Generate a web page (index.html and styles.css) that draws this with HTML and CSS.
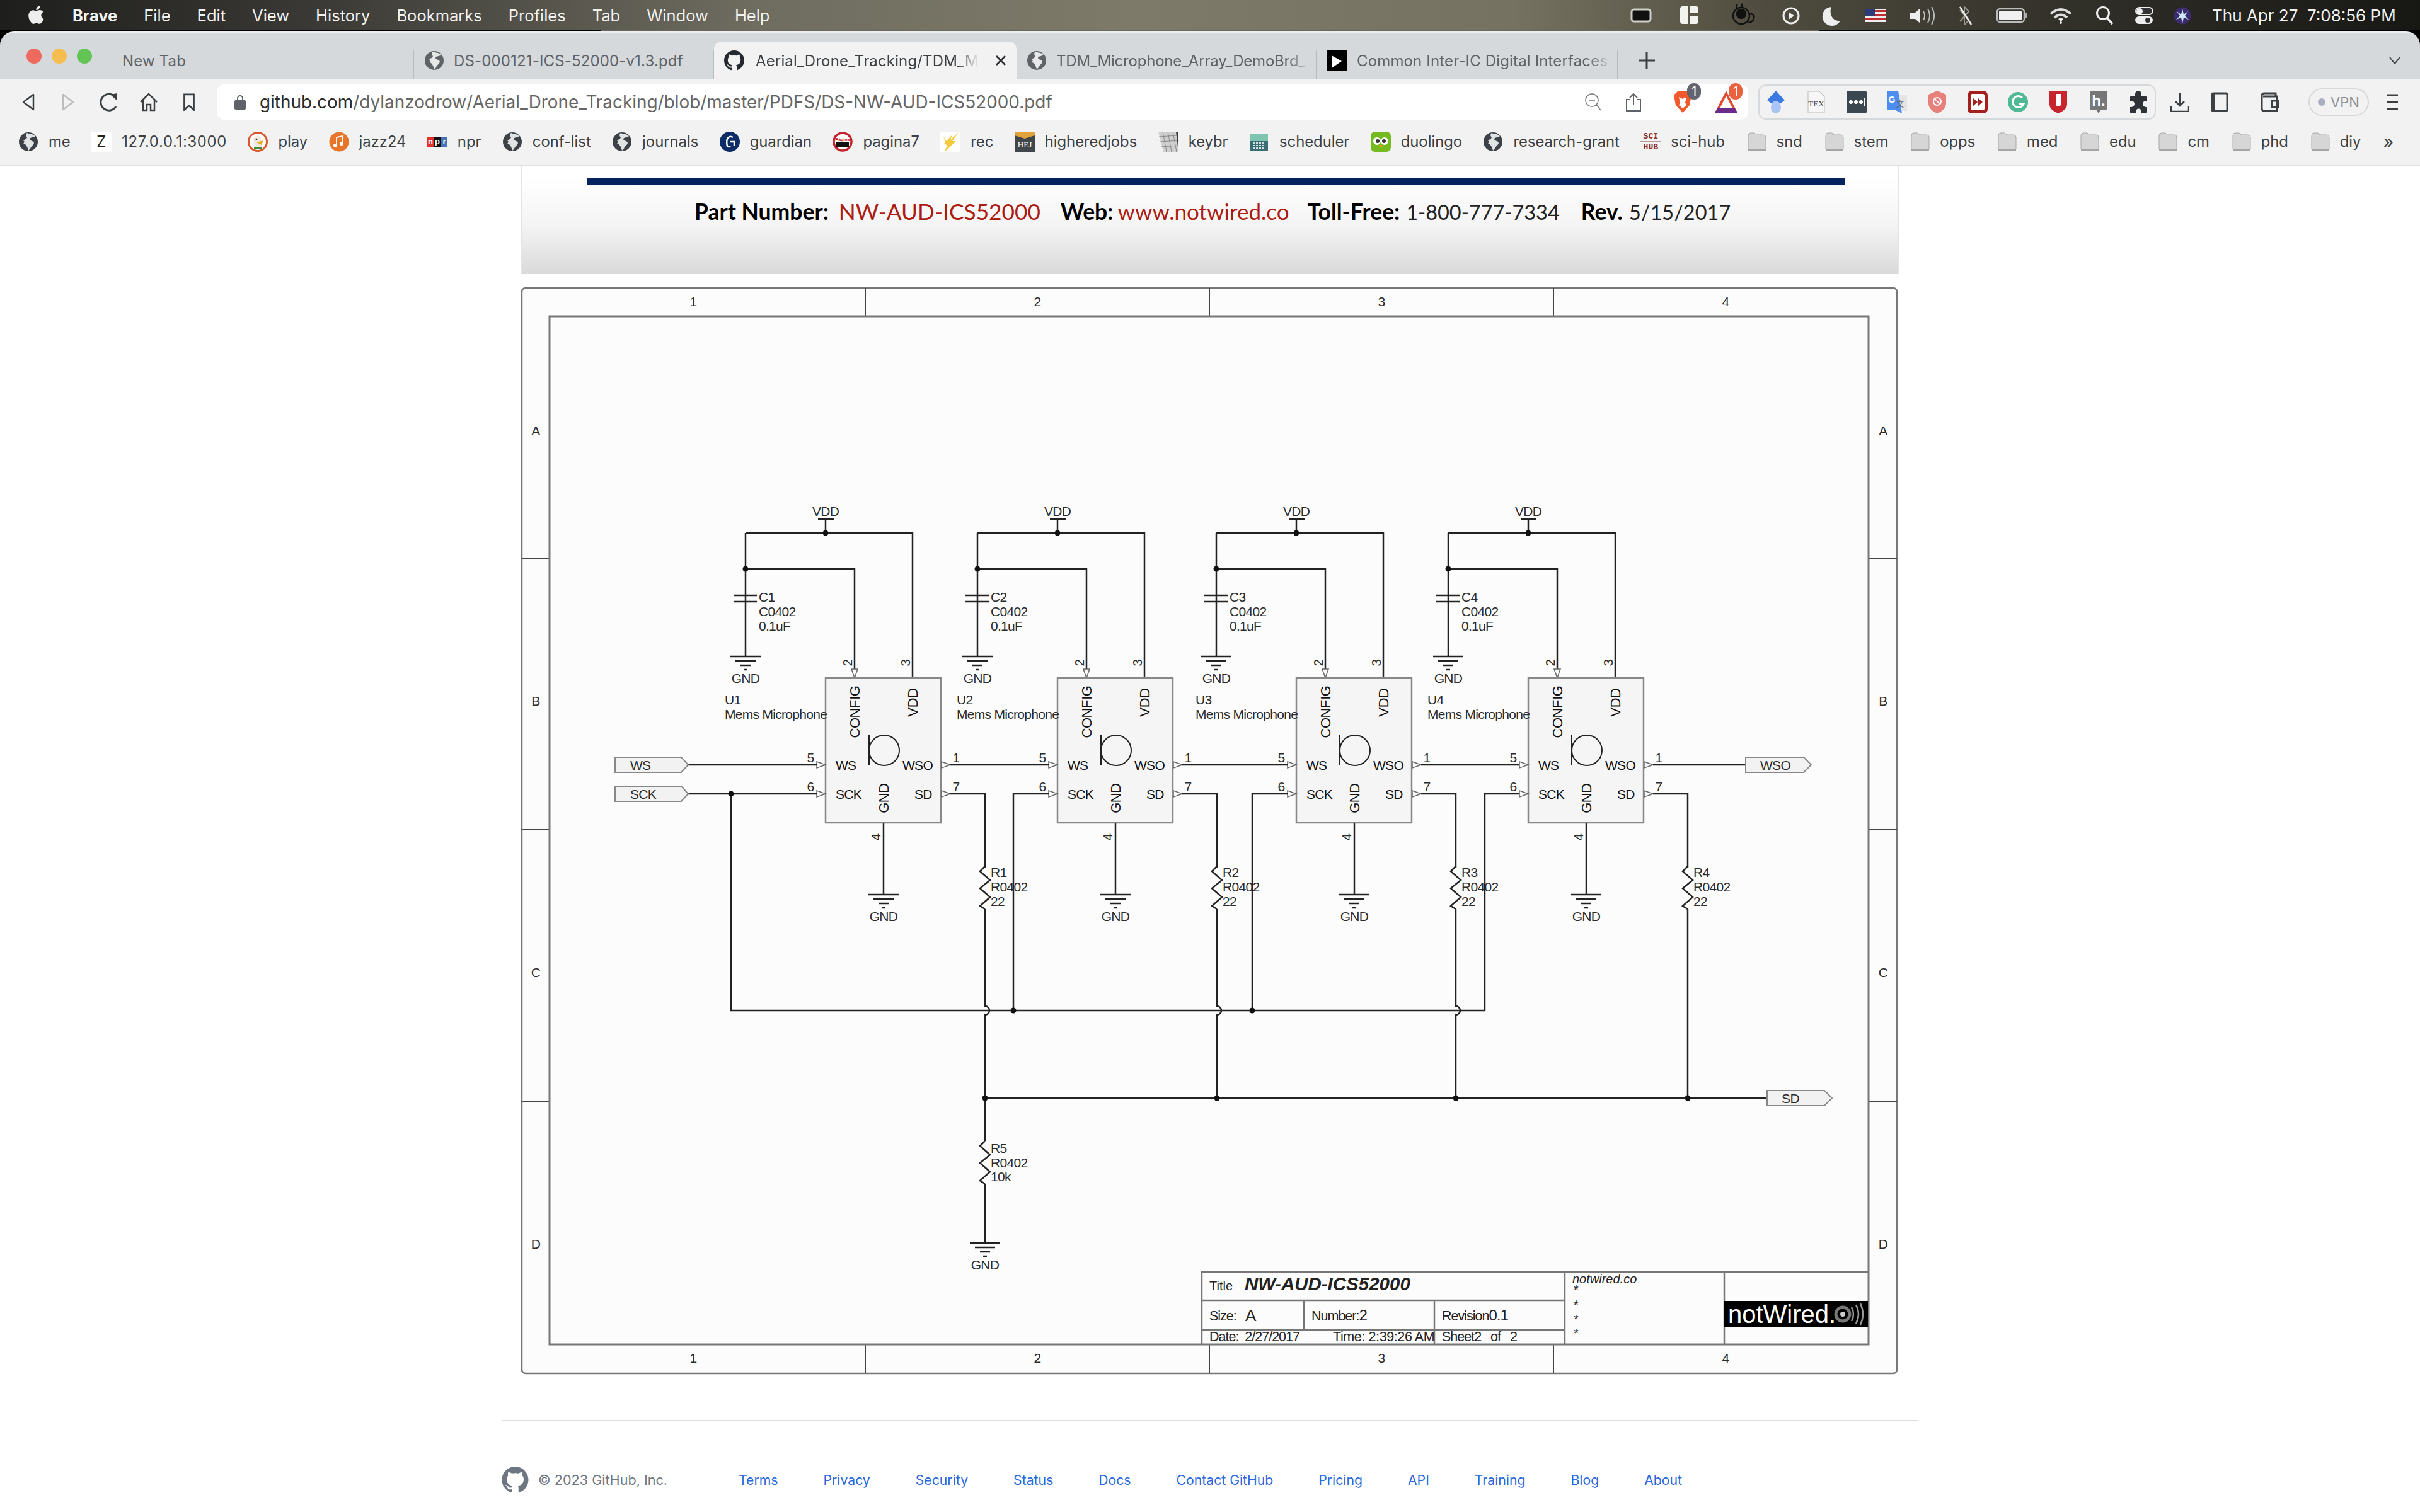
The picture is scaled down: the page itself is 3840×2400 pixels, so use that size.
FILE: index.html
```html
<!DOCTYPE html>
<html lang="en">
<head>
    <meta charset="UTF-8">
    <title>Aerial_Drone_Tracking/DS-NW-AUD-ICS52000.pdf</title>
    <link rel="stylesheet" href="styles.css">
</head>
<body>
    <svg class="sprite">
        <symbol id="i-globe" viewBox="0 0 32 32">
            <circle cx="16" cy="16" r="15" fill="currentColor"/>
            <path d="M14 2c4 2 9 1 13 5-3 3-8 1-9 5 1 3 6 2 7 6-1 4-5 5-6 9l-3 3c-1-4-2-7-5-10-3-1-5-3-4-6 3-1 6-2 7-5-2-2-3-4 0-7z" fill="#fff" fill-opacity=".85"/>
            <path d="M3 12c3 0 5 2 7 4l-2 3c-3-1-5-3-5-7z" fill="currentColor"/>
        </symbol>
        <symbol id="i-github" viewBox="0 0 16 16">
            <path fill="currentColor" d="M8 0C3.58 0 0 3.58 0 8c0 3.54 2.29 6.53 5.47 7.59.4.07.55-.17.55-.38 0-.19-.01-.82-.01-1.49-2.01.37-2.53-.49-2.69-.94-.09-.23-.48-.94-.82-1.13-.28-.15-.68-.52-.01-.53.63-.01 1.08.58 1.23.82.72 1.21 1.87.87 2.33.66.07-.52.28-.87.51-1.07-1.78-.2-3.64-.89-3.64-3.95 0-.87.31-1.59.82-2.15-.08-.2-.36-1.02.08-2.12 0 0 .67-.21 2.2.82.64-.18 1.32-.27 2-.27.68 0 1.36.09 2 .27 1.53-1.04 2.2-.82 2.2-.82.44 1.1.16 1.92.08 2.12.51.56.82 1.27.82 2.15 0 3.07-1.87 3.75-3.65 3.95.29.25.54.73.54 1.48 0 1.07-.01 1.93-.01 2.2 0 .21.15.46.55.38A8.013 8.013 0 0016 8c0-4.42-3.58-8-8-8z"/>
        </symbol>
        <symbol id="i-folder" viewBox="0 0 30 32">
            <path d="M1 6q0-4 4-4h6l3 3h11q4 0 4 4v18q0 3-3 3H4q-3 0-3-3z" fill="#d6d6d6" stroke="#a9a9a9"/>
            <rect x="1" y="27" width="28" height="3" fill="#a5a5a5"/>
        </symbol>
    </svg>

    <header class="menubar">
        <svg class="apple" viewBox="3 3 17 18.5"><path fill="#eee" d="M17.05 20.28c-.98.95-2.05.8-3.08.35-1.09-.46-2.09-.48-3.24 0-1.44.62-2.2.44-3.06-.35C2.79 15.25 3.51 7.59 9.05 7.31c1.35.07 2.29.74 3.08.8 1.18-.24 2.31-.93 3.57-.84 1.51.12 2.65.72 3.4 1.8-3.12 1.87-2.38 5.98.48 7.13-.57 1.5-1.31 2.99-2.54 4.09zM12.03 7.25c-.15-2.23 1.66-4.07 3.74-4.25.29 2.58-2.34 4.5-3.74 4.25z"/></svg>
        <nav class="menu">
            <span class="app-name">Brave</span>
            <span>File</span><span>Edit</span><span>View</span><span>History</span><span>Bookmarks</span><span>Profiles</span><span>Tab</span><span>Window</span><span>Help</span>
        </nav>
        <!-- status icons are one strip, coordinates are screen px -->
        <svg class="status-icons" viewBox="2580 0 910 48">
            <rect x="2589" y="15" width="30" height="19" rx="4" fill="#111" stroke="#cfcfc8" stroke-width="3"/>
            <path d="M2670 10h8v28h-8q-4 0-4-4V14q0-4 4-4zM2681 10h10q4 0 4 4v7h-14zM2681 25h14v9q0 4-4 4h-10z" fill="#f2f2ee"/>
            <g fill="none" stroke="#111" stroke-width="2.5">
                <circle cx="2763" cy="25" r="13"/><circle cx="2763" cy="22" r="7" fill="#111"/>
                <path d="M2776 22q9 0 7 7t-10 7M2757 7q-3 3 0 6M2765 6q-3 3 0 6"/>
            </g>
            <circle cx="2842" cy="25" r="12" fill="none" stroke="#eee" stroke-width="3"/><path d="M2838 19l9 6-9 6z" fill="#eee"/>
            <path d="M2906 11a15 15 0 1 0 14 22c-10 2-19-9-14-22z" fill="#eee"/>
            <rect x="2960" y="14" width="33" height="21" fill="#eee"/>
            <path d="M2960 16h33v3h-33zM2960 22h33v3h-33zM2960 28h33v3h-33z" fill="#c0292e"/><rect x="2960" y="14" width="15" height="11" fill="#2d3a78"/>
            <path d="M3031 20h8l8-7v24l-8-7h-8z" fill="#eee"/>
            <path d="M3052 18q4 7 0 14M3059 14q6 11 0 22M3065 11q8 14 0 28" fill="none" stroke="#bbb" stroke-width="2"/>
            <path d="M3110 16l14 16-7 7V11l7 7-14 16" fill="none" stroke="#99978c" stroke-width="2"/><path d="M3110 11l18 28" stroke="#eee" stroke-width="2.5"/>
            <rect x="3169" y="14" width="43" height="21" rx="5" fill="none" stroke="#bbb" stroke-width="2.5"/><rect x="3172" y="17" width="36" height="15" rx="2" fill="#f0f0f0"/><rect x="3214" y="21" width="3" height="7" fill="#aaa"/>
            <path d="M3254 22q16-14 32 0M3260 28q10-9 20 0" fill="none" stroke="#ddd" stroke-width="4"/><path d="M3270 35l-4-5q4-3 8 0z" fill="#eee"/><circle cx="3270" cy="36" r="2" fill="#eee"/>
            <circle cx="3337" cy="21" r="9.500" fill="none" stroke="#eee" stroke-width="3"/><path d="M3344 29l8 9" stroke="#eee" stroke-width="3.500"/>
            <rect x="3389" y="12" width="27" height="11" rx="5.500" fill="#333" stroke="#eee" stroke-width="2"/><circle cx="3395" cy="18" r="5" fill="#eee"/>
            <rect x="3388" y="26" width="28" height="12" rx="6" fill="#eee"/><circle cx="3408" cy="32" r="4" fill="#333"/>
            <circle cx="3463" cy="25" r="13.500" fill="#3b2a6e"/>
            <path d="M3463 14l2 9 7-5-5 7 6 6-8-3-2 9-2-9-8 3 6-6-5-7 7 5z" fill="#cfe8f8"/>
        </svg>
        <div class="clock">Thu Apr 27&nbsp; 7:08:56 PM</div>
    </header>

    <div class="window-top">
        <div class="tabstrip">
            <div class="lights"><i class="light-red"></i><i class="light-amber"></i><i class="light-green"></i></div>
            <div class="tab tab-first"><span class="tab-title">New Tab</span></div>
            <div class="tab">
                <svg class="fav tab-globe"><use href="#i-globe"/></svg>
                <span class="tab-title">DS-000121-ICS-52000-v1.3.pdf</span>
            </div>
            <div class="tab active">
                <svg class="fav gh"><use href="#i-github"/></svg>
                <span class="tab-title fade">Aerial_Drone_Tracking/TDM_Mi</span>
                <svg class="tab-close" viewBox="0 0 16 16"><path d="M1 1l14 14M15 1L1 15" stroke="#2d2f33" stroke-width="2.500"/></svg>
            </div>
            <div class="tab">
                <svg class="fav tab-globe"><use href="#i-globe"/></svg>
                <span class="tab-title fade tight-title">TDM_Microphone_Array_DemoBrd_</span>
            </div>
            <div class="tab tab-last">
                <svg class="fav" viewBox="0 0 32 32"><rect width="32" height="32" fill="#000"/><path d="M7 8l16 9-16 11z" fill="#fff"/></svg>
                <span class="tab-title fade">Common Inter-IC Digital Interfaces f</span>
            </div>
            <svg class="new-tab" viewBox="0 0 26 26"><path d="M13 0v26M0 13h26" stroke="#3c4043" stroke-width="3"/></svg>
            <svg class="tab-list" viewBox="0 0 18 12"><path d="M1 1l8 10 8-10" fill="none" stroke="#3c4043" stroke-width="2"/></svg>
        </div>
    </div>

    <div class="toolbar">
        <div class="nav-buttons">
            <svg viewBox="0 0 20 28"><path d="M18 2v24L2 14z" fill="none" stroke="#3c4043" stroke-width="2.500" stroke-linejoin="round"/></svg>
            <svg viewBox="0 0 20 28"><path d="M2 2v24l16-12z" fill="none" stroke="#bdbdbd" stroke-width="2.500" stroke-linejoin="round"/></svg>
            <svg viewBox="0 0 30 30"><path d="M24 6A13 13 0 1 0 26 22" fill="none" stroke="#3c4043" stroke-width="3"/><path d="M17 3l11-2-1 11z" fill="#3c4043"/></svg>
            <svg viewBox="0 0 28 30"><path d="M1 15L14 2l13 13M5 12v16h6v-9h6v9h6V12" fill="none" stroke="#3c4043" stroke-width="2.500"/></svg>
            <svg viewBox="0 0 20 30"><path d="M2 2h16v26l-8-7-8 7z" fill="none" stroke="#3c4043" stroke-width="3"/></svg>
        </div>
        <div class="address">
            <svg class="lock" viewBox="0 0 18 24"><path d="M5 10V6a4 4 0 0 1 8 0v4" fill="none" stroke="#5f6368" stroke-width="2"/><rect y="9" width="18" height="15" rx="2" fill="#5f6368"/></svg>
            <span class="url"><b>github.com</b>/dylanzodrow/Aerial_Drone_Tracking/blob/master/PDFS/DS-NW-AUD-ICS52000.pdf</span>
            <svg class="addr-ico zoom-out" viewBox="0 0 26 28"><circle cx="11" cy="11" r="10" fill="none" stroke="#777" stroke-width="1.500"/><path d="M6 11h10M18 18l7 9" stroke="#777" stroke-width="1.500"/></svg>
            <svg class="addr-ico share" viewBox="0 0 24 30"><path d="M6 11H1v18h22V11h-5M12 20V2M6 8l6-6 6 6" fill="none" stroke="#5f6368" stroke-width="2"/></svg>
            <i class="addr-sep"></i>
            <div class="shield">
                <svg viewBox="0 0 30 36"><path d="M7 1h16l6 6-3 16-11 12L4 23 1 7z" fill="#f1582b"/><path d="M9 10l6 3 6-3-2 9 2 4-6 5-6-5 2-4z" fill="#fff"/></svg>
                <span class="badge grey">1</span>
            </div>
            <div class="shield triangle">
                <svg viewBox="0 0 36 36"><path d="M18 0L0 35h36z" fill="#e0492f"/><path d="M18 8L7 30h22z" fill="#fff"/><path d="M4 28h28l4 7H0z" fill="#6a2b8b"/></svg>
                <span class="badge orange">1</span>
            </div>
        </div>
        <div class="ext-group">
            <svg viewBox="0 0 28 36"><path d="M14 0l14 15-14 11L0 15z" fill="#3b78e0"/><ellipse cx="14" cy="26" rx="8" ry="10" fill="#a9c4f5"/></svg>
            <svg viewBox="0 0 28 36"><path d="M1 1h18l8 8v26H1z" fill="#f7f7f7" stroke="#bbb"/><text x="14" y="25" class="ext-tex">TEX</text></svg>
            <svg viewBox="0 0 32 36"><rect width="32" height="36" rx="3" fill="#3a4650"/><circle cx="7" cy="18" r="3" fill="#fff"/><circle cx="15" cy="18" r="3" fill="#fff"/><circle cx="23" cy="18" r="3" fill="#fff"/><rect x="28" y="11" width="1.500" height="14" fill="#fff"/></svg>
            <svg viewBox="0 0 32 36"><rect x="14" y="6" width="18" height="26" fill="#e4e4e4"/><path d="M0 0h18l6 36-12-6H0z" fill="#4d8df0"/><text x="8" y="19" class="ext-g">G</text><text x="21" y="26" class="ext-t">文</text></svg>
            <svg viewBox="0 0 28 36"><path d="M14 0l14 6v14q0 10-14 16Q0 30 0 20V6z" fill="#e77f7a"/><circle cx="14" cy="17" r="6" fill="none" stroke="#fff" stroke-width="2"/><path d="M10 13l8 8" stroke="#fff" stroke-width="2"/></svg>
            <svg viewBox="0 0 32 36"><rect width="32" height="36" rx="7" fill="#a4201d"/><rect x="5" y="5" width="22" height="26" rx="3" fill="#fff"/><path d="M8 11l8 7-8 7zM16 11l8 7-8 7z" fill="#a4201d"/></svg>
            <svg viewBox="0 0 32 36"><circle cx="16" cy="18" r="16" fill="#4fb894"/><path d="M23 11a9 9 0 1 0 2 10h-7" fill="none" stroke="#fff" stroke-width="3"/></svg>
            <svg viewBox="0 0 28 36"><path d="M0 0h28v22q0 8-14 14Q0 30 0 22z" fill="#c7252e"/><path d="M10 5h8v18q-4 3-8 0z" fill="#fff"/></svg>
            <svg viewBox="0 0 28 36"><path d="M0 2q0-2 2-2h24q2 0 2 2v26q0 2-2 2h-8l-4 6-4-6H2q-2 0-2-2z" fill="#777"/><text x="14" y="24" class="ext-h">h.</text></svg>
            <svg viewBox="0 0 30 36"><path d="M9 8V5a5 5 0 0 1 10 0v3h7q2 0 2 2v6h-2a5 5 0 0 0 0 10h2v8q0 2-2 2h-7v-3a4 4 0 0 0-9 0v3H3q-2 0-2-2v-8h2a5 5 0 0 0 0-10H1v-6q0-2 2-2z" fill="#2f3337"/></svg>
        </div>
        <div class="tool-right">
            <svg viewBox="0 0 30 32"><path d="M15 1v20M8 15l7 7 7-7M1 22v9h28v-9" fill="none" stroke="#3c4043" stroke-width="2.500"/></svg>
            <svg viewBox="0 0 28 32"><rect x="2" y="2" width="24" height="28" rx="2" fill="none" stroke="#3c4043" stroke-width="3"/><rect x="2" y="2" width="5" height="28" fill="#3c4043"/></svg>
            <svg viewBox="0 0 30 32"><path d="M4 7h22v23H6q-4 0-4-4V6q0-4 4-4h18v5M18 14h10v10H18z" fill="none" stroke="#3c4043" stroke-width="3"/></svg>
            <div class="vpn"><i></i>VPN</div>
            <svg viewBox="0 0 20 28"><path d="M1 3h18M1 14h18M1 25h18" stroke="#3c4043" stroke-width="3"/></svg>
        </div>
    </div>

    <div class="bookmarks">
        <a class="bm"><svg class="fav bm-globe"><use href="#i-globe"/></svg>me</a>
        <a class="bm bm-ip"><span class="fav fav-z">Z</span>127.0.0.1:3000</a>
        <a class="bm"><svg class="fav" viewBox="0 0 32 32"><circle cx="16" cy="16" r="14.500" fill="#fff" stroke="#d9572b" stroke-width="3"/><path d="M9 10q6-6 12-1l1 15H11z" fill="#f0e9df"/><circle cx="14" cy="12" r="1.500" fill="#333"/><path d="M14 17l11-3-3 7z" fill="#e7a91f"/><path d="M10 26h12" stroke="#3a8f3b" stroke-width="2"/></svg>play</a>
        <a class="bm"><svg class="fav" viewBox="0 0 32 32"><circle cx="16" cy="16" r="15.500" fill="#e8762a"/><path d="M12 22V9l10-2v12" fill="none" stroke="#fff" stroke-width="2"/><circle cx="10" cy="22" r="3" fill="#fff"/><circle cx="20" cy="19" r="3" fill="#fff"/></svg>jazz24</a>
        <a class="bm"><svg class="fav" viewBox="0 0 32 32"><rect y="8" width="10" height="16" fill="#e0342a"/><rect x="11" y="8" width="10" height="16" fill="#111"/><rect x="22" y="8" width="10" height="16" fill="#4673b8"/><text x="5" y="20" class="npr-t">n</text><text x="16" y="20" class="npr-t">p</text><text x="27" y="20" class="npr-t">r</text></svg>npr</a>
        <a class="bm"><svg class="fav bm-globe"><use href="#i-globe"/></svg>conf-list</a>
        <a class="bm"><svg class="fav bm-globe"><use href="#i-globe"/></svg>journals</a>
        <a class="bm"><svg class="fav" viewBox="0 0 32 32"><circle cx="16" cy="16" r="16" fill="#0d2c66"/><path d="M21 9q-5-3-8 1t-1 13q3 2 5 0M16 16h7v7" fill="none" stroke="#fff" stroke-width="2.500"/></svg>guardian</a>
        <a class="bm"><svg class="fav" viewBox="0 0 32 32"><circle cx="16" cy="16" r="14" fill="#fff" stroke="#c5232b" stroke-width="3.500"/><text x="16" y="15" class="pag-t">Página</text><rect x="6" y="17" width="20" height="7" fill="#111"/></svg>pagina7</a>
        <a class="bm"><svg class="fav" viewBox="0 0 32 32"><rect width="32" height="32" fill="#fff"/><path d="M29 1L19 15h6L7 32l5-13H6L19 5l-3 8zM5 8l9 13-4 1z" fill="#f3c93e"/></svg>rec</a>
        <a class="bm"><svg class="fav" viewBox="0 0 32 32"><rect width="32" height="32" fill="#41464b"/><path d="M0 0h32v6l-16 5L0 6z" fill="#e2a33b"/><text x="16" y="25" class="hej-t">HEJ</text></svg>higheredjobs</a>
        <a class="bm"><svg class="fav" viewBox="0 0 32 32"><path d="M0 0h28l4 32H8z" fill="#cfcfcf"/><path d="M7 0l6 32M15 0l6 32M23 0l6 32M1 8l28-2M3 16l28-2M5 24l27-2" stroke="#888" stroke-width="1" fill="none"/><path d="M28 0h4v32z" fill="#333"/></svg>keybr</a>
        <a class="bm"><svg class="fav" viewBox="0 0 32 32"><rect x="2" y="3" width="28" height="28" fill="#7fc4b0"/><rect x="2" y="15" width="28" height="16" fill="#3b6e74"/><path d="M6 18h20M6 22h20M6 26h20" stroke="#cfe3e0" stroke-width="2" stroke-dasharray="3 2"/></svg>scheduler</a>
        <a class="bm"><svg class="fav" viewBox="0 0 32 32"><rect width="32" height="32" rx="7" fill="#75bb1f"/><circle cx="10" cy="15" r="6" fill="#fff"/><circle cx="22" cy="15" r="6" fill="#fff"/><circle cx="11" cy="15" r="3" fill="#333"/><circle cx="21" cy="15" r="3" fill="#333"/><path d="M13 21h6l-3 5z" fill="#e89a25"/></svg>duolingo</a>
        <a class="bm"><svg class="fav bm-globe"><use href="#i-globe"/></svg>research-grant</a>
        <a class="bm"><span class="fav fav-sci">SCI<i></i>HUB</span>sci-hub</a>
        <a class="bm bm-dir"><svg class="fav fold"><use href="#i-folder"/></svg>snd</a>
        <a class="bm bm-dir"><svg class="fav fold"><use href="#i-folder"/></svg>stem</a>
        <a class="bm bm-dir"><svg class="fav fold"><use href="#i-folder"/></svg>opps</a>
        <a class="bm bm-dir"><svg class="fav fold"><use href="#i-folder"/></svg>med</a>
        <a class="bm bm-dir"><svg class="fav fold"><use href="#i-folder"/></svg>edu</a>
        <a class="bm bm-dir"><svg class="fav fold"><use href="#i-folder"/></svg>cm</a>
        <a class="bm bm-dir"><svg class="fav fold"><use href="#i-folder"/></svg>phd</a>
        <a class="bm bm-dir"><svg class="fav fold"><use href="#i-folder"/></svg>diy</a>
        <span class="bm-more">»</span>
    </div>

    <main class="pdf-view">
        <div class="pdf-head">
            <div class="navy-rule"></div>
            <div class="part-line">
                <b>Part Number:</b><span class="part-red big">NW-AUD-ICS52000</span>
                <b class="web">Web:</b><span class="part-red site">www.notwired.co</span>
                <b class="toll">Toll-Free:</b><span class="num">1-800-777-7334</span>
                <b class="rev">Rev.</b><span class="num">5/15/2017</span>
            </div>
        </div>

        <!-- viewBox uses screen px so the drawing reads like the sheet -->
        <svg class="sheet" viewBox="827 456 2186 1726">
            <defs>
                <g id="gnd">
                    <path class="wire" d="M-24 0h48M-16 7h32M-8 14h16M-3 21h6"/>
                    <text class="t mid" y="42">GND</text>
                </g>
                <g id="zig">
                    <path class="wire" d="M0 0l-8 8 16 14-16 13 16 14-16 14 8 5"/>
                </g>
                <path id="pin-in" class="pin" d="M0-5l14 5-14 5z"/>
                <g id="unit">
                    <text class="t mid" x="1310" y="819">VDD</text>
                    <path class="wire" d="M1298 824h25M1310 824v22M1183 846h265V1076M1183 846v196M1183 903h173v159M1164 945h37M1164 955h37"/>
                    <circle class="dot" cx="1310" cy="846" r="4.500"/>
                    <circle class="dot" cx="1183" cy="903" r="4.500"/>
                    <use href="#gnd" x="1183" y="1042"/>
                    <path class="pin" d="M1351 1062h10l-5 14z"/>
                    <text class="t mid" transform="translate(1352 1052) rotate(-90)">2</text>
                    <text class="t mid" transform="translate(1444 1052) rotate(-90)">3</text>
                    <rect class="chip" x="1310" y="1076" width="183" height="230"/>
                    <text class="t chip-v mid" transform="translate(1364 1130) rotate(-90)">CONFIG</text>
                    <text class="t chip-v mid" transform="translate(1456 1115) rotate(-90)">VDD</text>
                    <text class="t chip-v mid" transform="translate(1410 1267) rotate(-90)">GND</text>
                    <circle class="mic" cx="1403" cy="1191" r="24"/>
                    <path class="wire thin" d="M1379 1167v48"/>
                    <text class="t chip-h" x="1326" y="1222">WS</text>
                    <text class="t chip-h" x="1432" y="1222">WSO</text>
                    <text class="t chip-h" x="1326" y="1268">SCK</text>
                    <text class="t chip-h" x="1451" y="1268">SD</text>
                    <use href="#pin-in" x="1296" y="1214"/>
                    <use href="#pin-in" x="1296" y="1260"/>
                    <use href="#pin-in" x="1494" y="1214"/>
                    <use href="#pin-in" x="1494" y="1260"/>
                    <text class="t mid" x="1286" y="1210">5</text>
                    <text class="t mid" x="1286" y="1256">6</text>
                    <text class="t mid" x="1517" y="1210">1</text>
                    <text class="t mid" x="1517" y="1256">7</text>
                    <text class="t mid" transform="translate(1397 1329) rotate(-90)">4</text>
                    <path class="wire" d="M1402 1306v114M1508 1260h55v117"/>
                    <use href="#gnd" x="1402" y="1420"/>
                    <use href="#zig" x="1563" y="1375"/>
                </g>
            </defs>

            <rect class="sheet-bg" x="828" y="457" width="2182" height="1723" rx="6"/>
            <path class="frame-line" d="M1373 457v45M1919 457v45M2465 457v45M1373 2134v46M1919 2134v46M2465 2134v46"/>
            <path class="frame-line" d="M828 886h44M828 1317h44M828 1749h44M2965 886h45M2965 1317h45M2965 1749h45"/>
            <rect class="inner-frame" x="872" y="502" width="2093" height="1632"/>
            <g class="labels">
                <text class="t mid" x="1100" y="486">1</text>
                <text class="t mid" x="1646" y="486">2</text>
                <text class="t mid" x="2192" y="486">3</text>
                <text class="t mid" x="2738" y="486">4</text>
                <text class="t mid" x="1100" y="2163">1</text>
                <text class="t mid" x="1646" y="2163">2</text>
                <text class="t mid" x="2192" y="2163">3</text>
                <text class="t mid" x="2738" y="2163">4</text>
                <text class="t mid" x="850" y="691">A</text>
                <text class="t mid" x="850" y="1120">B</text>
                <text class="t mid" x="850" y="1551">C</text>
                <text class="t mid" x="850" y="1982">D</text>
                <text class="t mid" x="2988" y="691">A</text>
                <text class="t mid" x="2988" y="1120">B</text>
                <text class="t mid" x="2988" y="1551">C</text>
                <text class="t mid" x="2988" y="1982">D</text>
            </g>

            <use href="#unit"/>
            <use href="#unit" x="368"/>
            <use href="#unit" x="747"/>
            <use href="#unit" x="1115"/>

            <g class="refs">
                <text class="t" x="1150" y="1118">U1</text><text class="t" x="1150" y="1141">Mems Microphone</text>
                <text class="t" x="1518" y="1118">U2</text><text class="t" x="1518" y="1141">Mems Microphone</text>
                <text class="t" x="1897" y="1118">U3</text><text class="t" x="1897" y="1141">Mems Microphone</text>
                <text class="t" x="2265" y="1118">U4</text><text class="t" x="2265" y="1141">Mems Microphone</text>

                <text class="t" x="1204" y="955">C1</text><text class="t" x="1204" y="978">C0402</text><text class="t" x="1204" y="1001">0.1uF</text>
                <text class="t" x="1572" y="955">C2</text><text class="t" x="1572" y="978">C0402</text><text class="t" x="1572" y="1001">0.1uF</text>
                <text class="t" x="1951" y="955">C3</text><text class="t" x="1951" y="978">C0402</text><text class="t" x="1951" y="1001">0.1uF</text>
                <text class="t" x="2319" y="955">C4</text><text class="t" x="2319" y="978">C0402</text><text class="t" x="2319" y="1001">0.1uF</text>

                <text class="t" x="1572" y="1392">R1</text><text class="t" x="1572" y="1415">R0402</text><text class="t" x="1572" y="1438">22</text>
                <text class="t" x="1940" y="1392">R2</text><text class="t" x="1940" y="1415">R0402</text><text class="t" x="1940" y="1438">22</text>
                <text class="t" x="2319" y="1392">R3</text><text class="t" x="2319" y="1415">R0402</text><text class="t" x="2319" y="1438">22</text>
                <text class="t" x="2687" y="1392">R4</text><text class="t" x="2687" y="1415">R0402</text><text class="t" x="2687" y="1438">22</text>
                <text class="t" x="1572" y="1830">R5</text><text class="t" x="1572" y="1853">R0402</text><text class="t" x="1572" y="1875">10k</text>
            </g>

            <!-- nets between the parts -->
            <path class="wire" d="M1092 1214h204M1092 1260h204M1508 1214h156M1876 1214h167M2255 1214h156M2623 1214h147"/>
            <path class="wire" d="M1160 1260v344h1196V1260h55M1608 1604V1260h56M1987 1604V1260h56"/>
            <path class="wire" d="M1563 1443V1597A7 7 0 0 1 1563 1611V1811"/>
            <path class="wire" d="M1931 1443V1597A7 7 0 0 1 1931 1611V1743"/>
            <path class="wire" d="M2310 1443V1597A7 7 0 0 1 2310 1611V1743"/>
            <path class="wire" d="M2678 1443V1743M1563 1743H2804"/>
            <use href="#zig" x="1563" y="1811"/>
            <path class="wire" d="M1563 1879v94"/>
            <use href="#gnd" x="1563" y="1973"/>
            <g>
                <circle class="dot" cx="1160" cy="1260" r="4.500"/>
                <circle class="dot" cx="1608" cy="1604" r="4.500"/>
                <circle class="dot" cx="1987" cy="1604" r="4.500"/>
                <circle class="dot" cx="1563" cy="1743" r="4.500"/>
                <circle class="dot" cx="1931" cy="1743" r="4.500"/>
                <circle class="dot" cx="2310" cy="1743" r="4.500"/>
                <circle class="dot" cx="2678" cy="1743" r="4.500"/>
            </g>

            <path class="port" d="M976 1202h105l11 12-11 12H976z"/><text class="t" x="1000" y="1222">WS</text>
            <path class="port" d="M976 1248h105l11 12-11 12H976z"/><text class="t" x="1000" y="1268">SCK</text>
            <path class="port" d="M2770 1202h92l12 12-12 12h-92z"/><text class="t" x="2793" y="1222">WSO</text>
            <path class="port" d="M2804 1731h91l12 12-12 12h-91z"/><text class="t mid" x="2841" y="1751">SD</text>

            <!-- title block -->
            <path class="frame-line heavy" d="M1907 2134V2019H2965M1907 2064H2483M1907 2111H2483M2069 2064v47M2276 2064v70M2483 2019v115M2736 2019v115"/>
            <text class="tb" x="1919" y="2048">Title</text>
            <text class="tb-title" x="1975" y="2048">NW-AUD-ICS52000</text>
            <text class="tb tight" x="1919" y="2096">Size:</text><text class="tb-a" x="1976" y="2097">A</text>
            <text class="tb tight" x="2081" y="2096">Number:<tspan class="tb-val">2</tspan></text>
            <text class="tb tight" x="2288" y="2096">Revision<tspan class="tb-val">0.1</tspan></text>
            <text class="tb tight" x="1919" y="2129">Date:&#160; 2/27/2017</text>
            <text class="tb tight tb-time" x="2115" y="2129">Time: 2:39:26 AM</text>
            <text class="tb tight" x="2288" y="2129">Sheet2&#160;&#160; of&#160;&#160; 2</text>
            <text class="tb tb-i" x="2495" y="2037">notwired.co</text>
            <text class="tb" x="2497" y="2054">*</text><text class="tb" x="2497" y="2078">*</text><text class="tb" x="2497" y="2101">*</text><text class="tb" x="2497" y="2123">*</text>
            <rect x="2736" y="2065" width="228" height="41" fill="#000"/>
            <text class="logo-text" x="2742" y="2100">notWired.</text>
            <g fill="none">
                <circle cx="2924" cy="2086" r="11" stroke="#777" stroke-width="5"/>
                <circle cx="2924" cy="2086" r="4" fill="#ccc"/>
                <path d="M2938 2075q6 11 0 22M2945 2071q8 15 0 30M2952 2069q8 17 0 34" stroke="#999" stroke-width="2.500"/>
            </g>
        </svg>
    </main>

    <footer class="site-foot">
        <div class="foot-row">
            <svg class="foot-logo"><use href="#i-github"/></svg>
            <span class="copy">© 2023 GitHub, Inc.</span>
            <nav class="foot-links">
                <a>Terms</a><a>Privacy</a><a>Security</a><a>Status</a><a>Docs</a><a>Contact GitHub</a><a>Pricing</a><a>API</a><a>Training</a><a>Blog</a><a>About</a>
            </nav>
        </div>
    </footer>
</body>
</html>
```
FILE: styles.css
```css
* {
    margin: 0;
    padding: 0;
    box-sizing: border-box;
}

html, body {
    height: 2400px;
    overflow: hidden;
    background: #fff;
    font-family: Inter, "Liberation Sans", sans-serif;
}

.sprite {
    display: none;
}

/* menu bar */
.menubar {
    height: 48px;
    display: flex;
    align-items: center;
    color: #f1f1ee;
    font-size: 25.500px;
    background: linear-gradient(90deg, #1e1e1c 0, #3a3935 500px, #6f6d60 1200px, #7d7a69 1800px, #767261 2400px, #4f4c3f 2800px, #2b2a24 3400px, #171714 3840px);
}

.apple {
    width: 27px;
    height: 30px;
    margin-left: 43px;
    margin-right: 45px;
}

.menu {
    display: flex;
    gap: 42px;
}

.app-name {
    font-weight: 700;
}

.status-icons {
    width: 910px;
    height: 48px;
    margin-left: auto;
}

.clock {
    width: 292px;
    margin-left: 20px;
    margin-right: 38px;
    font-size: 26px;
    white-space: nowrap;
}

/* tabs */
.window-top {
    padding-top: 2px;
    background: linear-gradient(90deg, #000 954px, #6a685c 954px, #6a685c 2886px, #000 2886px);
}

.tabstrip {
    height: 76px;
    background: #d5d9dc;
    border-radius: 22px 22px 0 0;
    display: flex;
    align-items: flex-end;
    border-top: 2px solid #eceef0;
}

.lights {
    display: flex;
    gap: 16px;
    align-self: center;
    margin-left: 42px;
}

.lights i {
    width: 24px;
    height: 24px;
    border-radius: 50%;
}

.light-red { background: #ee6a5f; }
.light-amber { background: #f5bd4f; }
.light-green { background: #61c454; }

.tab {
    width: 477px;
    height: 60px;
    padding: 0 8px 0 16px;
    display: flex;
    align-items: center;
    gap: 15px;
    font-size: 24px;
    letter-spacing: .15px;
    color: #5f6368;
    white-space: nowrap;
    overflow: hidden;
    /* separator only covers the lower part of the strip */
    background: linear-gradient(#b8bcc0, #b8bcc0) right bottom / 2px 46px no-repeat;
}

.tab-first {
    width: 529px;
    margin-left: -18px;
    padding-left: 66px;
}

.tab-last {
    width: 478px;
}

.tab.active {
    width: 480px;
    margin-left: -1px;
    padding-right: 17px;
    gap: 18px;
    background: #f2f2f2;
    border-radius: 12px 12px 0 0;
    color: #3c4043;
}

.tab-title {
    flex: 1;
    overflow: hidden;
}

.fade {
    -webkit-mask-image: linear-gradient(90deg, #000 90%, transparent);
    mask-image: linear-gradient(90deg, #000 90%, transparent);
}

.tight-title {
    letter-spacing: -.2px;
}

.tab-close {
    width: 16px;
    height: 16px;
    flex: none;
    margin-left: 8px;
}

.tab-globe {
    color: #5f6368;
}

.gh {
    color: #24292f;
}

.new-tab {
    width: 26px;
    height: 26px;
    margin-left: 32px;
    margin-bottom: 17px;
}

.tab-list {
    width: 18px;
    height: 12px;
    margin-left: auto;
    margin-right: 31px;
    margin-bottom: 24px;
}

/* toolbar */
.toolbar {
    height: 68px;
    padding-top: 8px;
    padding-left: 35px;
    display: flex;
    align-items: flex-start;
    background: #f2f2f2;
}

.nav-buttons {
    display: flex;
    align-items: center;
    height: 56px;
    width: 309px;
}

.nav-buttons svg {
    flex: none;
    width: 20px;
    height: 28px;
    margin-right: 43px;
}

.nav-buttons svg:nth-child(2) {
    margin-right: 40px;
}

.nav-buttons svg:nth-child(3) {
    width: 30px;
    margin-right: 34px;
    height: 30px;
}

.nav-buttons svg:nth-child(4) {
    width: 28px;
    margin-right: 40px;
    height: 30px;
}

.nav-buttons svg:nth-child(5) {
    margin-right: 0;
}

.address {
    width: 2430px;
    height: 56px;
    background: #fff;
    border-radius: 12px;
    display: flex;
    align-items: center;
    padding-left: 28px;
    font-size: 27.900px;
    color: #666;
}

.lock {
    width: 18px;
    height: 24px;
    margin-right: 22px;
}

.url {
    width: 2103px;
    white-space: nowrap;
}

.url b {
    font-weight: 400;
    color: #2b2b2b;
}

.addr-ico {
    height: 30px;
}

.zoom-out {
    width: 26px;
}

.share {
    width: 24px;
    margin-left: 39px;
}

.addr-sep {
    width: 1px;
    height: 30px;
    background: #c4c4c4;
    margin: 0 22px 0 28px;
}

.shield {
    position: relative;
    display: flex;
    width: 30px;
    margin-right: 36px;
}

.shield svg {
    width: 30px;
    height: 36px;
}

.shield.triangle {
    width: 36px;
    margin-right: 0;
}

.shield.triangle svg {
    width: 36px;
}

.badge {
    position: absolute;
    top: -12px;
    right: -14px;
    width: 22px;
    height: 26px;
    border-radius: 11px;
    font-size: 20px;
    line-height: 26px;
    text-align: center;
    color: #fff;
}

.badge.grey { background: #62646f; }
.badge.orange { background: #e9613d; right: -8px; }

.ext-group {
    width: 631px;
    height: 56px;
    margin-left: 16px;
    border: 2px solid #d5d9dc;
    border-radius: 12px;
    display: flex;
    align-items: center;
    gap: 32px;
    padding-left: 10px;
}

.ext-group svg {
    width: 32px;
    height: 36px;
}

.ext-tex {
    font: 13px "Liberation Serif", serif;
    fill: #444;
    text-anchor: middle;
}

.ext-g {
    font: 700 14px "Liberation Sans", sans-serif;
    fill: #fff;
    text-anchor: middle;
}

.ext-t {
    font: 12px "Noto Sans CJK SC", sans-serif;
    fill: #666;
    text-anchor: middle;
}

.ext-h {
    font: 700 24px "Liberation Sans", sans-serif;
    fill: #fff;
    text-anchor: middle;
}

.tool-right {
    display: flex;
    align-items: center;
    height: 56px;
    margin-left: 23px;
}

.tool-right svg {
    width: 30px;
    height: 32px;
    margin-right: 34px;
}

.tool-right svg:nth-child(2) {
    width: 28px;
    margin-right: 51px;
}

.tool-right svg:nth-child(3) {
    margin-right: 46px;
}

.tool-right svg:last-child {
    width: 20px;
    height: 28px;
    margin-right: 0;
}

.vpn {
    width: 96px;
    height: 44px;
    margin-right: 27px;
    border: 2px solid #d5d9dc;
    border-radius: 22px;
    display: flex;
    align-items: center;
    justify-content: center;
    gap: 8px;
    font-size: 22px;
    color: #8b8f94;
}

.vpn i {
    width: 12px;
    height: 12px;
    border-radius: 50%;
    background: #a9afc0;
}

/* bookmarks */
.bookmarks {
    height: 70px;
    padding: 0 0 7px 29px;
    border-bottom: 2px solid #dde0e3;
    background: #f2f2f2;
    display: flex;
    align-items: center;
    gap: 33.400px;
    font-size: 23.800px;
    color: #3c4043;
    white-space: nowrap;
}

.bm {
    display: flex;
    align-items: center;
    gap: 16px;
}

.bm-ip {
    letter-spacing: .7px;
}

.bm-dir {
    margin-left: 2.400px;
}

.fav {
    width: 32px;
    height: 32px;
    flex: none;
}

.bm-globe {
    color: #3d4248;
}

.fold {
    width: 30px;
}

.fav-z {
    background: #fff;
    color: #222;
    font-size: 24px;
    text-align: center;
    line-height: 32px;
}

.fav-sci {
    display: block;
    font: 700 13px/15px "Liberation Mono", monospace;
    color: #8e2a22;
    text-align: center;
}

.fav-sci i {
    display: block;
    height: 2px;
    background: #b79a94;
}

.npr-t {
    font: 700 13px "Liberation Sans", sans-serif;
    fill: #fff;
    text-anchor: middle;
}

.pag-t {
    font: 700 7px "Liberation Sans", sans-serif;
    fill: #c5232b;
    text-anchor: middle;
}

.hej-t {
    font: 13px "Liberation Serif", serif;
    fill: #fff;
    text-anchor: middle;
}

.bm-more {
    margin-left: auto;
    margin-right: 42px;
    font-size: 28px;
}

/* pdf */
.pdf-view {
    width: 2186px;
    margin: 0 auto;
}

.pdf-head {
    height: 171px;
    padding-top: 18px;
    border-left: 1px solid #e4e4e4;
    border-right: 1px solid #e4e4e4;
    background: linear-gradient(#fff 10%, #f4f4f4 55%, #d9d9d9);
}

.navy-rule {
    width: 1996px;
    height: 11px;
    margin-left: 104px;
    background: #05235c;
}

.part-line {
    margin-top: 21px;
    margin-left: 274px;
    display: flex;
    align-items: baseline;
    font: 35.500px Lato, "Liberation Sans", sans-serif;
    color: #222;
    white-space: nowrap;
}

.part-line b {
    color: #000;
}

.part-line .big {
    margin-left: 16px;
    font-size: 35.300px;
    color: #ad1c12;
}

.part-line .site {
    margin-left: 7px;
    font-size: 35px;
    color: #ad1c12;
}

.part-line .web { margin-left: 32px; }
.part-line .toll { margin-left: 29px; }
.part-line .rev { margin-left: 34px; }

.part-line .num {
    margin-left: 10px;
    font-size: 32.500px;
}

.sheet {
    display: block;
    width: 2186px;
    height: 1726px;
    margin-top: 21px;
}

.sheet-bg {
    fill: #fcfcfc;
    stroke: #777;
    stroke-width: 2.5;
}

.inner-frame {
    fill: #fcfcfc;
    stroke: #777;
    stroke-width: 3;
}

.frame-line {
    fill: none;
    stroke: #444;
    stroke-width: 2;
}

.frame-line.heavy {
    stroke: #777;
    stroke-width: 2.5;
}

.wire {
    fill: none;
    stroke: #222;
    stroke-width: 2.5;
}

.wire.thin {
    stroke-width: 2;
}

.dot {
    fill: #111;
}

.pin {
    fill: #fcfcfc;
    stroke: #666;
    stroke-width: 1.5;
}

.chip {
    fill: #f5f5f5;
    stroke: #888;
    stroke-width: 2.5;
}

.mic {
    fill: none;
    stroke: #222;
    stroke-width: 2;
}

.port {
    fill: #f2f2f2;
    stroke: #888;
    stroke-width: 2;
}

.t {
    font: 21px "Liberation Sans", sans-serif;
    letter-spacing: -.7px;
    fill: #2b2b2b;
}

.mid {
    text-anchor: middle;
}

.chip-v {
    font-size: 22px;
    fill: #111;
    letter-spacing: -.4px;
}

.chip-h {
    fill: #111;
}

.tb {
    font: 20px "Liberation Sans", sans-serif;
    fill: #222;
}

.tb.tight {
    font-size: 21.500px;
    letter-spacing: -1px;
}

.tb.tb-time {
    letter-spacing: -.4px;
}

.tb-val {
    font-size: 24px;
}

.tb-i {
    font-style: italic;
}

.tb-title {
    font: italic 700 29.500px "Liberation Sans", sans-serif;
    fill: #222;
}

.tb-a {
    font: 26px "Liberation Sans", sans-serif;
    fill: #222;
}

.logo-text {
    font: 40px "Liberation Sans", sans-serif;
    fill: #fff;
}

/* footer */
.site-foot {
    width: 2248px;
    margin: 72px auto 0;
    padding-top: 72px;
    border-top: 2px solid #d8dee4;
}

.foot-row {
    display: flex;
    align-items: center;
    font-size: 21.600px;
    height: 42px;
}

.foot-logo {
    width: 43px;
    height: 42px;
    color: #6e7781;
}

.copy {
    margin-left: 15px;
    color: #6e7781;
}

.foot-links {
    display: flex;
    gap: 72px;
    margin-left: 113px;
    font-size: 21.200px;
    color: #2a68dc;
}
```
